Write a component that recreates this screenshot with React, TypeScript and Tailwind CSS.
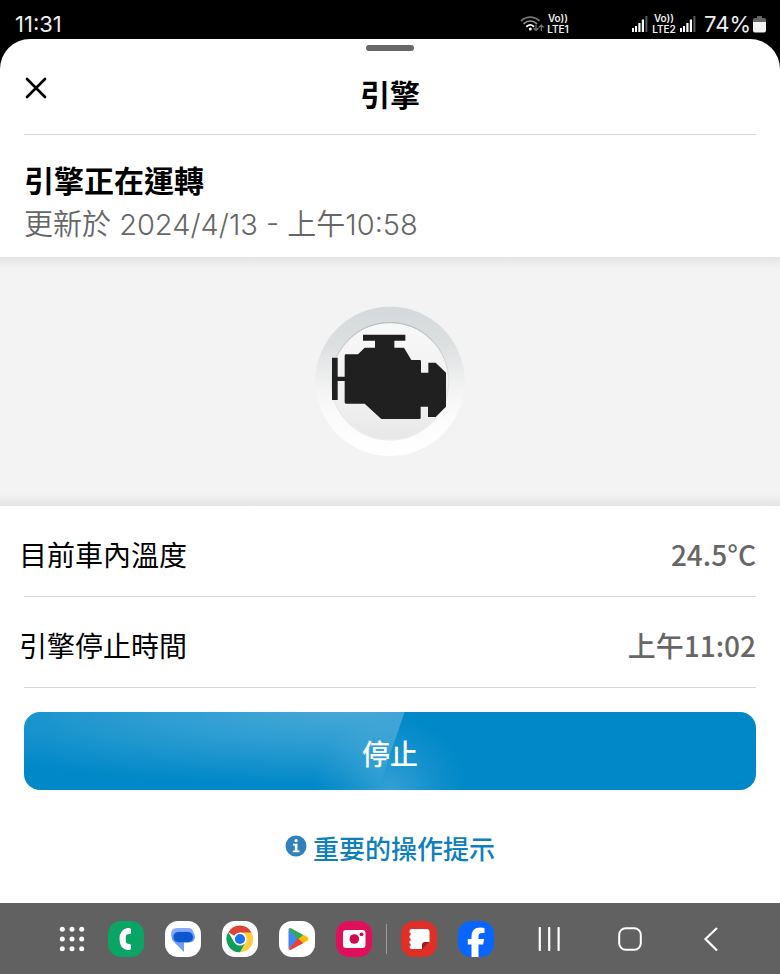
import React from "react";

const sans = "font-['Noto_Sans_CJK_TC','Noto_Sans_CJK_SC',sans-serif]";

function VoLte({ label }: { label: string }) {
  return (
    <span className="flex w-6 flex-col items-center text-[10px] leading-[11px] font-semibold">
      <span>Vo))</span>
      <span>{label}</span>
    </span>
  );
}

function Signal() {
  return (
    <svg viewBox="0 0 16 18" className="h-[18px] w-4" aria-hidden="true">
      <g fill="#fff">
        <rect x="0" y="13" width="2" height="4" />
        <rect x="3" y="11" width="2" height="6" />
        <rect x="6.3" y="8" width="2.2" height="9" />
        <rect x="9.8" y="4.5" width="2.2" height="12.500" />
      </g>
      <rect x="13.400" y="1" width="2" height="16" fill="#5a5a5a" />
    </svg>
  );
}

function StatusBar() {
  return (
    <header className="flex h-[39px] items-center bg-black pt-2 pr-3.5 pl-[15px] font-['Inter',sans-serif] text-[22px] leading-6 text-[#eeeeee]">
      <time>11:31</time>
      <div className="ml-auto flex items-center">
        <svg viewBox="0 0 24 17" className="mr-0.5 h-[17px] w-6" fill="none" strokeLinecap="round" aria-label="Wi-Fi">
          <path d="M1.500 5.500a13 13 0 0 1 17.500 0" stroke="#777" strokeWidth="1.700" />
          <path d="M4 8.500a9 9 0 0 1 12.500 0" stroke="#999" strokeWidth="1.700" />
          <path d="M7 11.300a5 5 0 0 1 6.500 0" stroke="#fff" strokeWidth="1.800" />
          <circle cx="10.300" cy="14" r="1.500" fill="#fff" />
          <path d="M16 10v5.500m-2-2 2 2 2-2M21.300 15.500V10m-2 2 2-2 2 2" stroke="#777" strokeWidth="1.200" />
        </svg>
        <VoLte label="LTE1" />
        <div className="ml-[62px] flex items-center gap-1">
          <Signal />
          <VoLte label="LTE2" />
          <Signal />
        </div>
        <span className="ml-2">74%</span>
        <svg viewBox="0 0 13 18" className="ml-0.5 h-[18px] w-[13px]" aria-hidden="true">
          <path d="M4 1h5v2h2.500q1.500 0 1.500 1.500V8H0V4.500Q0 3 1.500 3H4Z" fill="#666" />
          <path d="M0 7h13v8.500q0 2-2 2H2q-2 0-2-2Z" fill="#f2f2f2" />
        </svg>
      </div>
    </header>
  );
}

function EngineBadge() {
  return (
    <svg viewBox="45 48 450 450" className="size-[150px]" role="img" aria-label="引擎">
      <defs>
        <linearGradient id="ring" x1="0" y1="0" x2="0" y2="1">
          <stop offset="0" stopColor="#d5d9db" />
          <stop offset="0.25" stopColor="#dcdfe0" />
          <stop offset="0.58" stopColor="#f5f5f5" />
          <stop offset="0.75" stopColor="#fbfbfb" />
          <stop offset="1" stopColor="#ffffff" />
        </linearGradient>
        <linearGradient id="face" x1="0" y1="0" x2="0" y2="1">
          <stop offset="0" stopColor="#f8f8f8" />
          <stop offset="0.7" stopColor="#f0f0f0" />
          <stop offset="1" stopColor="#e7e7e7" />
        </linearGradient>
        <linearGradient id="rim" x1="0" y1="0" x2="0" y2="1">
          <stop offset="0" stopColor="#bbbec0" />
          <stop offset="0.5" stopColor="#e2e4e5" />
          <stop offset="1" stopColor="#ededed" />
        </linearGradient>
      </defs>
      <circle cx="270" cy="274" r="224" fill="url(#ring)" />
      <circle cx="270" cy="274" r="176" fill="url(#face)" stroke="url(#rim)" strokeWidth="4" />
      <path
        fill="#202020"
        d="M189 134H316V152H283V173H312L334 210H359Q363 210 363 214V248H385V218H407L438 248V350L407 381H384V350H362V383Q362 387 358 387H244L194 341H138Q134 341 134 337V273H113V330H96V203H113V260H134V197Q134 193 138 193H174L194 173H225V152H189Z"
      />
    </svg>
  );
}

function InfoRow({ label, value }: { label: string; value: string }) {
  return (
    <div className="flex justify-between border-b border-[#d6d6d6] pt-7 pb-[22px] text-[28px] leading-10">
      <dt className="-ml-[5px] text-black">{label}</dt>
      <dd className="font-medium text-[#666666]">{value}</dd>
    </div>
  );
}

function AppButton({ name, tile, children }: { name: string; tile: string; children: React.ReactNode }) {
  return (
    <button type="button" aria-label={name} className={`size-9 shrink-0 overflow-hidden rounded-[13px] ${tile}`}>
      <svg viewBox="0 0 36 36" className="size-9" aria-hidden="true">
        {children}
      </svg>
    </button>
  );
}

function NavBar() {
  return (
    <nav className="flex h-[71px] items-center justify-center bg-[#616161]">
      <div className="flex items-center gap-[21px]">
        <button type="button" aria-label="所有應用程式" className="w-[30px]">
          <svg viewBox="0 0 30 30" className="size-[30px]" fill="#fff">
            {[5.3, 15, 24.7].map((y) =>
              [5.3, 15, 24.7].map((x) => <circle key={`${x}-${y}`} cx={x} cy={y} r="2.500" />),
            )}
          </svg>
        </button>
        <AppButton name="電話" tile="bg-[#0aa564]">
          <path
            d="M19.500 7h1.800q1.700 0 1.700 1.700v2.800q0 1.500-1.500 1.600l-1.700.1q-2 .2-2 2.300v5q0 2.100 2 2.300l1.700.1q1.500.1 1.500 1.600v2.800q0 1.700-1.700 1.700h-1.800q-8-1.200-8-11t8-11Z"
            fill="#fff"
          />
        </AppButton>
        <AppButton name="訊息" tile="bg-white">
          <path d="M12 7h11q5 0 5.500 4.500L24 19H12q-6-1-6-6 0-6 6-6Z" fill="#86a9ff" />
          <path d="M14 10.500h9q7 0 7 5.500t-7 5.500h-4V31l-9.500-9.500Q6.500 19 6.500 16q0-5.500 7.500-5.500Z" fill="#6f9bf8" />
          <rect x="8.500" y="11" width="19.500" height="10.300" rx="5.100" fill="#0b57d0" />
        </AppButton>
        <AppButton name="Chrome" tile="bg-white">
          <path d="M18 18 6.300 11.300A13.300 13.300 0 0 1 29.500 11.400Z" fill="#db4437" />
          <path d="M18 11.400h11.500A13.300 13.300 0 0 1 18 31.300L23.700 21.300Z" fill="#ffcd40" />
          <path d="M6.300 11.300A13.300 13.300 0 0 0 18 31.300l5.700-10H12.300Z" fill="#0f9d58" />
          <circle cx="18" cy="18" r="6.600" fill="#fff" />
          <circle cx="18" cy="18" r="5.100" fill="#1a73e8" />
        </AppButton>
        <AppButton name="Play 商店" tile="bg-white">
          <path d="M9.500 8v20L20 18Z" fill="#4285f4" />
          <path d="M9.500 8q1.200-1.500 3-.5L24.500 14 19.500 19Z" fill="#34a853" />
          <path d="M9.500 28q1.200 1.500 3 .5L24.500 22 19.500 17Z" fill="#ea4335" />
          <path d="m19.500 18 5-4.200 4 2.500q2 1.600 0 3.300l-4 2.500Z" fill="#fbbc04" />
        </AppButton>
        <AppButton name="相機" tile="bg-[#e00f5b]">
          <rect x="7" y="9" width="22.500" height="18" rx="3" fill="#fff" />
          <circle cx="18.300" cy="18" r="4.800" fill="#d00a52" />
          <circle cx="25.500" cy="13.300" r="1.900" fill="#d00a52" />
        </AppButton>
      </div>
      <span className="mx-3.5 h-[30px] w-px bg-[#9b9b9b]" />
      <div className="flex items-center gap-[21px]">
        <AppButton name="筆記" tile="bg-[#df2f27]">
          <path
            d="M11 8h14.500q3 0 3 3v10L21 28H11q-2.500 0-2.500-2.500a1.700 1.700 0 0 0 0-3.300v-2a1.700 1.700 0 0 0 0-3.300v-2a1.700 1.700 0 0 0 0-3.300V10.500Q8.500 8 11 8Z"
            fill="#fff"
          />
          <path d="M28.500 21 21 28.500V24q0-3 3-3Z" fill="#a3161a" />
        </AppButton>
        <AppButton name="Facebook" tile="bg-[#0866ff]">
          <path
            d="M13.500 36V23.500H9.800V18h3.700v-2.300q0-9.200 8.800-9.200 2 0 4.200.5v5h-2.400q-3.600 0-3.600 3.300V18h5.600l-1 5.500h-4.600V36Z"
            fill="#fff"
          />
        </AppButton>
      </div>
      <div className="ml-[43px] flex items-center gap-[57px]">
        <button type="button" aria-label="最近使用">
          <svg viewBox="0 0 24 24" className="size-6" stroke="#fff" strokeWidth="2.200" strokeLinecap="round">
            <path d="M2.800 1v22M12.200 1v22M21.600 1v22" />
          </svg>
        </button>
        <button type="button" aria-label="首頁">
          <svg viewBox="0 0 24 24" className="size-6" fill="none" stroke="#fff" strokeWidth="2">
            <rect x="1.200" y="1.200" width="21.600" height="21.600" rx="6.500" />
          </svg>
        </button>
        <button type="button" aria-label="返回">
          <svg viewBox="0 0 24 24" className="size-6" fill="none" stroke="#fff" strokeWidth="2.200">
            <path d="M18 1 6.500 12 18 23.500" />
          </svg>
        </button>
      </div>
    </nav>
  );
}

export default function App() {
  return (
    <div lang="zh-Hant" className={`flex min-h-screen flex-col bg-black ${sans}`}>
      <StatusBar />
      <main className="flex flex-1 flex-col rounded-t-[30px] bg-white pt-1.5 text-black">
        <div className="mx-auto h-1.5 w-12 rounded-full bg-[#666666]" />
        <div className="mx-6 grid grid-cols-[24px_1fr_24px] items-center border-b border-[#d6d6d6] pt-[22px] pb-[21px]">
          <button type="button" aria-label="關閉" className="mb-2.5">
            <svg viewBox="0 0 24 24" className="size-6" stroke="#000" strokeWidth="2.600" strokeLinecap="round">
              <path d="M3 3 21 21M21 3 3 21" />
            </svg>
          </button>
          <h1 className="text-center text-[30px] leading-10 font-bold">引擎</h1>
        </div>
        <section className="px-6 pt-6 pb-3">
          <h2 className="text-[30px] leading-10 font-bold">引擎正在運轉</h2>
          <p className="mt-1.5 font-['Inter','Noto_Sans_CJK_TC',sans-serif] text-[29px] leading-10 font-[350] text-[#666666]">
            更新於 2024/4/13 - 上午10:58
          </p>
        </section>
        <section className="flex justify-center bg-[linear-gradient(to_bottom,#e4e4e4,#f3f3f3_12px,#f3f3f3_calc(100%-12px),#e4e4e4)] pt-[49px] pb-[50px]">
          <EngineBadge />
        </section>
        <dl className="mx-6">
          <InfoRow label="目前車內溫度" value="24.5°C" />
          <InfoRow label="引擎停止時間" value="上午11:02" />
        </dl>
        <button
          type="button"
          className="relative mx-6 mt-6 overflow-hidden rounded-2xl bg-[#0088c8] pt-5 pb-4 text-[28px] leading-[42px] font-medium text-white"
        >
          <span className="absolute inset-y-0 left-0 w-[52%] bg-[radial-gradient(ellipse_125%_95%_at_85%_0%,rgba(255,255,255,0.27),rgba(255,255,255,0.17)_45%,transparent)] [clip-path:polygon(0_0,100%_0,93%_100%,0_100%)]" />
          <span className="absolute inset-0 bg-[radial-gradient(circle_76px_at_50%_100%,rgba(255,255,255,0.2),rgba(255,255,255,0.07)_60%,transparent)]" />
          <span className="relative">停止</span>
        </button>
        <a href="#tips" className="mx-auto mt-[38px] mb-8 flex items-center gap-1.5 text-[26px] leading-10 font-medium text-[#0e80bd]">
          <svg viewBox="0 0 22 22" className="mb-1 size-[22px]" aria-hidden="true">
            <circle cx="11" cy="11" r="10.500" fill="#2f80bd" />
            <path d="M8 8.700h4.500v6.800H14.500v1.700H7.800v-1.700H9.800v-5.100H8Z" fill="#fff" />
            <circle cx="11.100" cy="5.600" r="1.600" fill="#fff" />
          </svg>
          重要的操作提示
        </a>
      </main>
      <NavBar />
    </div>
  );
}
